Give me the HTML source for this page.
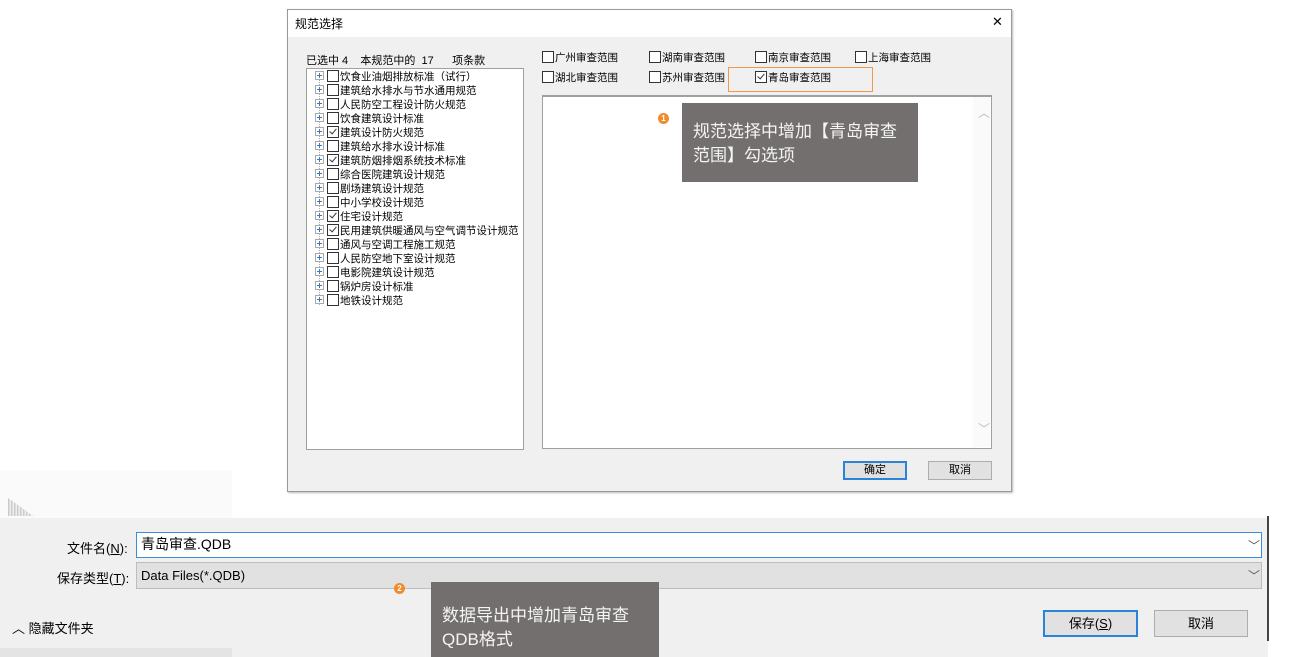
<!DOCTYPE html><html><head><meta charset="utf-8"><style>
body{margin:0;width:1291px;height:657px;background:#fff;position:relative;overflow:hidden;font-family:"Liberation Sans","Noto Sans CJK SC",sans-serif;font-size:11px;color:#000}
.a{position:absolute}
.cb{display:inline-block;width:10px;height:10px;border:1px solid #333;background:#fff;vertical-align:-2px;margin-right:1px;position:relative}
.cb.c::after{content:"";position:absolute;left:3px;top:0px;width:3px;height:6px;border:solid #333;border-width:0 1px 1px 0;transform:rotate(40deg)}
.pl{display:inline-block;width:7px;height:7px;border:1px solid #aaa;margin-right:3px;vertical-align:0px;position:relative;background:#fff}
.pl::before{content:"";position:absolute;left:1px;top:3px;width:5px;height:1px;background:#3c78c8}
.pl::after{content:"";position:absolute;left:3px;top:1px;width:1px;height:5px;background:#3c78c8}
.ti{position:absolute;left:8px;height:14px;line-height:14px;white-space:nowrap;font-size:10.5px}
.btn{position:absolute;background:#e1e1e1;border:1px solid #adadad;text-align:center;box-sizing:border-box}
.call{position:absolute;background:#736f6e;color:#f4f4f4;font-size:17px;line-height:24px;box-sizing:border-box}
.dot{position:absolute;width:11px;height:11px;border-radius:50%;background:#f08a2c;color:#fff;font-size:8px;line-height:11px;text-align:center;font-weight:bold}
</style></head><body>
<div class="a" style="left:287px;top:9px;width:725px;height:483px;background:#f0f0f0;border:1px solid #999;box-sizing:border-box;box-shadow:1px 1px 2px #bbb"></div>
<div class="a" style="left:288px;top:10px;width:723px;height:27px;background:#fff"></div>
<div class="a" style="left:295px;top:15px;font-size:12px">规范选择</div>
<div class="a" style="left:992px;top:14px;font-size:13px">✕</div>
<div class="a" style="left:306px;top:52px;white-space:pre">已选中 4    本规范中的  17      项条款</div>
<div class="a" style="left:306px;top:68px;width:218px;height:382px;background:#fff;border:1px solid #a0a0a0;box-sizing:border-box">
<div class="a" style="left:12px;top:6px;width:0;height:230px;border-left:1px dotted #aaa"></div>
<div class="ti" style="top:1px"><span class="pl"></span><span class="cb"></span>饮食业油烟排放标准（试行）</div>
<div class="ti" style="top:15px"><span class="pl"></span><span class="cb"></span>建筑给水排水与节水通用规范</div>
<div class="ti" style="top:29px"><span class="pl"></span><span class="cb"></span>人民防空工程设计防火规范</div>
<div class="ti" style="top:43px"><span class="pl"></span><span class="cb"></span>饮食建筑设计标准</div>
<div class="ti" style="top:57px"><span class="pl"></span><span class="cb c"></span>建筑设计防火规范</div>
<div class="ti" style="top:71px"><span class="pl"></span><span class="cb"></span>建筑给水排水设计标准</div>
<div class="ti" style="top:85px"><span class="pl"></span><span class="cb c"></span>建筑防烟排烟系统技术标准</div>
<div class="ti" style="top:99px"><span class="pl"></span><span class="cb"></span>综合医院建筑设计规范</div>
<div class="ti" style="top:113px"><span class="pl"></span><span class="cb"></span>剧场建筑设计规范</div>
<div class="ti" style="top:127px"><span class="pl"></span><span class="cb"></span>中小学校设计规范</div>
<div class="ti" style="top:141px"><span class="pl"></span><span class="cb c"></span>住宅设计规范</div>
<div class="ti" style="top:155px"><span class="pl"></span><span class="cb c"></span>民用建筑供暖通风与空气调节设计规范</div>
<div class="ti" style="top:169px"><span class="pl"></span><span class="cb"></span>通风与空调工程施工规范</div>
<div class="ti" style="top:183px"><span class="pl"></span><span class="cb"></span>人民防空地下室设计规范</div>
<div class="ti" style="top:197px"><span class="pl"></span><span class="cb"></span>电影院建筑设计规范</div>
<div class="ti" style="top:211px"><span class="pl"></span><span class="cb"></span>锅炉房设计标准</div>
<div class="ti" style="top:225px"><span class="pl"></span><span class="cb"></span>地铁设计规范</div>
</div>
<div class="a" style="left:542px;top:50px;font-size:10.5px"><span class="cb"></span>广州审查范围</div>
<div class="a" style="left:649px;top:50px;font-size:10.5px"><span class="cb"></span>湖南审查范围</div>
<div class="a" style="left:755px;top:50px;font-size:10.5px"><span class="cb"></span>南京审查范围</div>
<div class="a" style="left:855px;top:50px;font-size:10.5px"><span class="cb"></span>上海审查范围</div>
<div class="a" style="left:542px;top:70px;font-size:10.5px"><span class="cb"></span>湖北审查范围</div>
<div class="a" style="left:649px;top:70px;font-size:10.5px"><span class="cb"></span>苏州审查范围</div>
<div class="a" style="left:755px;top:70px;font-size:10.5px"><span class="cb c"></span>青岛审查范围</div>
<div class="a" style="left:728px;top:67px;width:145px;height:25px;border:1px solid #f29a4a;box-sizing:border-box"></div>
<div class="a" style="left:542px;top:95px;width:450px;height:354px;background:#fff;border:1px solid #a0a0a0;border-top:2px solid #a0a0a0;box-sizing:border-box"></div>
<div class="a" style="left:973px;top:97px;width:17px;height:350px;background:#fafafa"></div>
<div class="a" style="left:978px;top:104px;color:#bbb;font-size:12px">︿</div>
<div class="a" style="left:978px;top:420px;color:#bbb;font-size:12px">﹀</div>
<div class="call" style="left:682px;top:103px;width:236px;height:79px;padding:17px 0 0 11px">规范选择中增加【青岛审查<br>范围】勾选项</div>
<div class="dot" style="left:658px;top:113px">1</div>
<div class="btn" style="left:843px;top:461px;width:64px;height:19px;border:2px solid #2b83d8;line-height:15px">确定</div>
<div class="btn" style="left:928px;top:461px;width:64px;height:19px;line-height:17px">取消</div>

<div class="a" style="left:0;top:470px;width:232px;height:48px;background:#fafafa"></div>
<div class="a" style="left:8px;top:498px;width:25px;height:18px;background:linear-gradient(90deg,#ccc 50%,#eee 50%);background-size:3px 3px;clip-path:polygon(0 0,60% 60%,100% 100%,0 100%)"></div>
<div class="a" style="left:0;top:518px;width:1268px;height:139px;background:#f0f0f0"></div>
<div class="a" style="left:1267px;top:516px;width:2px;height:125px;background:#444"></div>
<div class="a" style="left:0;top:648px;width:232px;height:9px;background:#e4e4e4"></div>
<div class="a" style="left:67px;top:538px;font-size:13px">文件名(<u>N</u>):</div>
<div class="a" style="left:136px;top:532px;width:1126px;height:26px;background:#fff;border:1px solid #3c8ddb;box-sizing:border-box;font-size:14px;line-height:22px;padding-left:4px">青岛审查.QDB</div>
<div class="a" style="left:1248px;top:537px;font-size:12px;color:#555">﹀</div>
<div class="a" style="left:57px;top:568px;font-size:13px">保存类型(<u>T</u>):</div>
<div class="a" style="left:136px;top:562px;width:1126px;height:27px;background:#e1e1e1;border:1px solid #bdbdbd;box-sizing:border-box;font-size:13px;line-height:25px;padding-left:4px">Data Files(*.QDB)</div>
<div class="a" style="left:1248px;top:567px;font-size:12px;color:#555">﹀</div>
<div class="a" style="left:12px;top:618px;font-size:13px">︿&nbsp;隐藏文件夹</div>
<div class="btn" style="left:1043px;top:610px;width:95px;height:27px;border:2px solid #2b83d8;line-height:23px;font-size:13px">保存(<u>S</u>)</div>
<div class="btn" style="left:1154px;top:610px;width:94px;height:27px;line-height:25px;font-size:13px">取消</div>
<div class="call" style="left:431px;top:582px;width:228px;height:75px;padding:22px 0 0 11px">数据导出中增加青岛审查<br>QDB格式</div>
<div class="dot" style="left:394px;top:583px">2</div>
</body></html>
